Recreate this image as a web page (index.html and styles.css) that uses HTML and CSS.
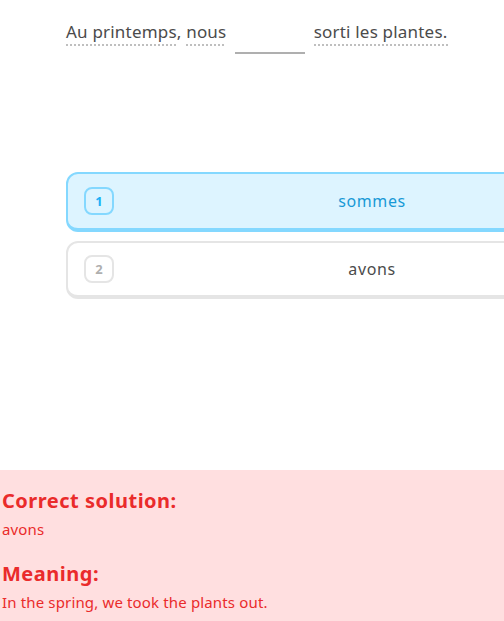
FILE: index.html
```html
<!DOCTYPE html>
<html lang="fr">
<head>
<meta charset="utf-8">
<link rel="stylesheet" href="styles.css">
</head>
<body>
<div class="page">
  <div class="sentence">
    <span class="tok">Au printemps</span>, <span class="tok">nous</span>
    <span class="blank"></span>
    <span class="tok">sorti les plantes.</span>
  </div>
  <div class="choices">
    <div class="choice selected">
      <span class="key">1</span>
      <span class="label">sommes</span>
    </div>
    <div class="choice">
      <span class="key">2</span>
      <span class="label">avons</span>
    </div>
  </div>
  <div class="feedback">
    <h2 class="fb-title">Correct solution:</h2>
    <p class="fb-text">avons</p>
    <h2 class="fb-title second">Meaning:</h2>
    <p class="fb-text">In the spring, we took the plants out.</p>
  </div>
</div>
</body>
</html>
```

FILE: styles.css
```css
* { box-sizing: border-box; }
html, body {
  margin: 0;
  padding: 0;
  background: #fff;
  overflow: hidden;
  width: 504px;
  height: 621px;
}
body {
  font-family: "Noto Sans", Roboto, sans-serif;
  color: #4b4b4b;
}
.page {
  display: flex;
  flex-direction: column;
  width: 504px;
}
.sentence {
  padding: 20px 0 0 66px;
  font-size: 17px;
  line-height: 24px;
  letter-spacing: 0.2px;
  color: #4b4b4b;
  white-space: nowrap;
  height: 56px;
}
.tok {
  display: inline-block;
  padding-bottom: 3px;
  background-image: repeating-linear-gradient(to right, #bfbfbf 0 2px, transparent 2px 4px);
  background-size: 100% 2px;
  background-repeat: no-repeat;
  background-position: left bottom;
  line-height: 22px;
}
.blank {
  display: inline-block;
  width: 70px;
  height: 2px;
  background: #afafaf;
  vertical-align: -16px;
  margin: 0 4px;
}
.choices {
  display: flex;
  flex-direction: column;
  gap: 9px;
  margin: 116px 0 0 66px;
  width: 612px;
}
.choice {
  display: flex;
  align-items: center;
  height: 58px;
  border: 2px solid #e5e5e5;
  border-bottom-width: 4px;
  border-radius: 12px;
  background: #fff;
  padding: 0 0 0 16px;
  position: relative;
}
.choice.selected {
  height: 60px;
  border-color: #84d8ff;
  background: #ddf4ff;
}
.key {
  width: 30px;
  height: 28px;
  border: 2px solid #e5e5e5;
  border-radius: 8px;
  display: flex;
  align-items: center;
  justify-content: center;
  font-size: 13px;
  font-weight: 700;
  color: #afafaf;
}
.selected .key {
  border-color: #84d8ff;
  color: #1cb0f6;
}
.label {
  flex: 1;
  text-align: center;
  font-size: 16px;
  letter-spacing: 0.6px;
  color: #4b4b4b;
  padding-right: 46px;
}
.selected .label { color: #1899d6; }
.feedback {
  margin-top: 171px;
  background: #ffdfe0;
  padding: 16px 2px 12px;
  color: #ea2b2b;
  height: 151px;
}
.fb-title {
  margin: 0;
  font-size: 20px;
  line-height: 30px;
  font-weight: 700;
  letter-spacing: 0.5px;
}
.fb-title.second { margin-top: 17px; }
.fb-text {
  margin: 0;
  font-size: 15px;
  line-height: 26px;
  letter-spacing: 0.15px;
}
```
